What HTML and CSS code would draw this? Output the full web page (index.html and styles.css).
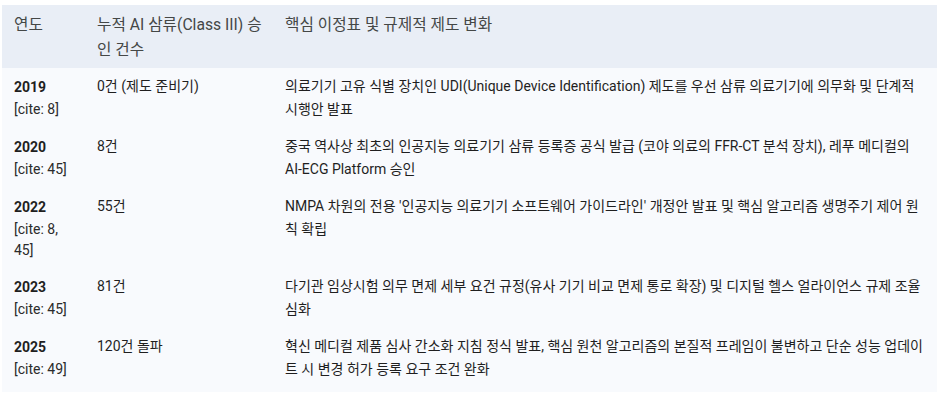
FILE: index.html
```html
<!DOCTYPE html>
<html lang="ko">
<head>
<meta charset="utf-8">
<link rel="stylesheet" href="styles.css">
</head>
<body>
<div class="wrap">
<table class="tbl">
  <colgroup>
    <col class="c1"><col class="c2"><col class="c3">
  </colgroup>
  <thead>
    <tr><th>연도</th><th>누적 AI 삼류(Class III) 승인 건수</th><th>핵심 이정표 및 규제적 제도 변화</th></tr>
  </thead>
  <tbody>
    <tr>
      <td><b class="yr">2019</b><span class="cite">[cite: 8]</span></td>
      <td>0건 (제도 준비기)</td>
      <td>의료기기 고유 식별 장치인 UDI(Unique Device Identification) 제도를 우선 삼류 의료기기에 의무화 및 단계적 시행안 발표</td>
    </tr>
    <tr>
      <td><b class="yr">2020</b><span class="cite">[cite: 45]</span></td>
      <td>8건</td>
      <td>중국 역사상 최초의 인공지능 의료기기 삼류 등록증 공식 발급 (코야 의료의 FFR-CT 분석 장치), 레푸 메디컬의 AI-ECG Platform 승인</td>
    </tr>
    <tr>
      <td><b class="yr">2022</b><span class="cite">[cite: 8, 45]</span></td>
      <td>55건</td>
      <td>NMPA 차원의 전용 '인공지능 의료기기 소프트웨어 가이드라인' 개정안 발표 및 핵심 알고리즘 생명주기 제어 원칙 확립</td>
    </tr>
    <tr>
      <td><b class="yr">2023</b><span class="cite">[cite: 45]</span></td>
      <td>81건</td>
      <td>다기관 임상시험 의무 면제 세부 요건 규정(유사 기기 비교 면제 통로 확장) 및 디지털 헬스 얼라이언스 규제 조율 심화</td>
    </tr>
    <tr>
      <td><b class="yr">2025</b><span class="cite">[cite: 49]</span></td>
      <td>120건 돌파</td>
      <td>혁신 메디컬 제품 심사 간소화 지침 정식 발표, 핵심 원천 알고리즘의 본질적 프레임이 불변하고 단순 성능 업데이트 시 변경 허가 등록 요구 조건 완화</td>
    </tr>
  </tbody>
</table>
</div>
</body>
</html>
```
FILE: styles.css
```css
html, body {
  margin: 0;
  padding: 0;
  background: #ffffff;
}
.wrap {
  padding: 5px 3px 0 2px;
}
.tbl {
  width: 935px;
  border-collapse: collapse;
  table-layout: fixed;
  font-family: "Roboto", "Noto Sans CJK KR", sans-serif;
  font-size: 14px;
  line-height: 23px;
  color: #1f1f1f;
  background: #f8fafd;
}
.c1 { width: 83px; }
.c2 { width: 188px; }
.c3 { width: 664px; }
.tbl th {
  background: #e9eef6;
  color: #444746;
  font-size: 15.7px;
  font-weight: 400;
  text-align: left;
  vertical-align: top;
  padding: 7px 5px 6px 12px;
  line-height: 25px;
}
.tbl td {
  vertical-align: top;
  padding: 7px 12px;
}
.tbl tbody tr:last-child td {
  padding-bottom: 11px;
}
.yr {
  display: block;
  font-weight: 700;
  line-height: 24px;
}
.cite {
  display: block;
  line-height: 21px;
  color: #2b2b2b;
}
```
